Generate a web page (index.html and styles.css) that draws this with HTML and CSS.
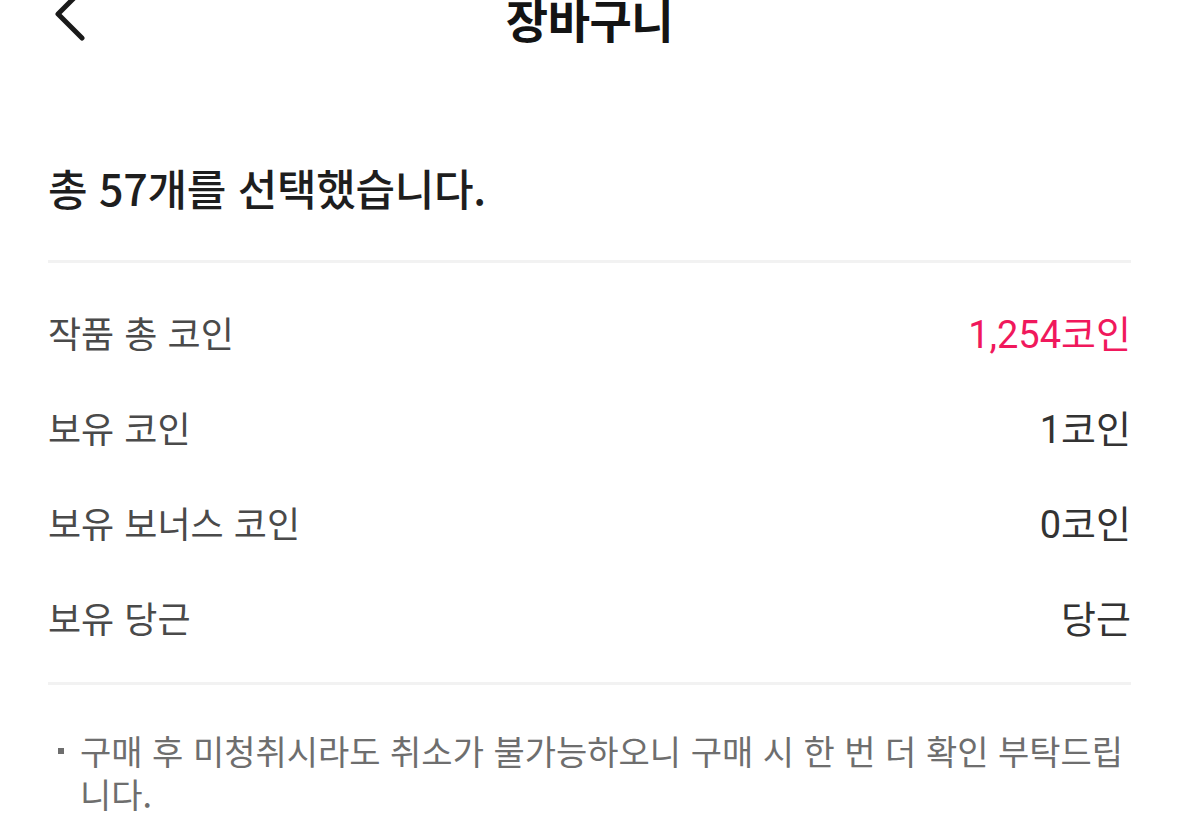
FILE: index.html
```html
<!DOCTYPE html>
<html lang="ko">

<head>
    <meta charset="UTF-8">
    <title>장바구니</title>
    <link rel="stylesheet" href="styles.css">
</head>

<body>

    <header class="topbar">
        <button class="back" type="button" aria-label="뒤로">
            <svg width="40" height="60" viewBox="0 0 40 60">
                <polyline points="32,-10 8,14 32,38" fill="none" stroke="#1a1a1a" stroke-width="5"
                    stroke-linecap="round" stroke-linejoin="round" />
            </svg>
        </button>
        <h1 class="title">장바구니</h1>
    </header>

    <main class="cart">
        <p class="count">총 57개를 선택했습니다.</p>

        <ul class="summary">
            <li class="row">
                <span class="label">작품 총 코인</span>
                <span class="value total">1,254코인</span>
            </li>
            <li class="row">
                <span class="label">보유 코인</span>
                <span class="value">1코인</span>
            </li>
            <li class="row">
                <span class="label">보유 보너스 코인</span>
                <span class="value">0코인</span>
            </li>
            <li class="row">
                <span class="label">보유 당근</span>
                <span class="value">당근</span>
            </li>
        </ul>

        <ul class="notice">
            <li>구매 후 미청취시라도 취소가 불가능하오니 구매 시 한 번 더 확인 부탁드립니다.</li>
        </ul>
    </main>

</body>

</html>
```

FILE: styles.css
```css
body {
    margin: 0;
    background-color: #fff;
    font-family: "Noto Sans CJK KR", "Noto Sans", sans-serif;
    color: #1a1a1a;
}

/* Header */
.topbar {
    position: relative;
    height: 36px;
    display: flex;
    align-items: center;
    justify-content: center;
}

.back {
    position: absolute;
    left: 50px;
    top: 0;
    padding: 0;
    border: 0;
    background: none;
    height: 36px;
    overflow: visible;
}

.back svg {
    display: block;
    overflow: visible;
}

.title {
    margin: 0;
    font-size: 46px;
    font-weight: 700;
    line-height: 26px;
    letter-spacing: -0.5px;
    color: #141414;
}

/* Content */
.cart {
    padding: 0 48px;
}

.count {
    margin: 0;
    padding: 127px 0 49px;
    font-size: 43px;
    font-weight: 500;
    line-height: 48px;
    letter-spacing: -0.3px;
    color: #1e1e1e;
    border-bottom: 3px solid #f2f2f2;
}

.summary {
    list-style: none;
    margin: 0;
    padding: 21px 0 18px;
    border-bottom: 3px solid #f2f2f2;
}

.row {
    display: flex;
    justify-content: space-between;
    align-items: center;
    height: 95px;
    font-size: 36px;
}

.label {
    color: #4a4a4a;
}

.value {
    font-family: Roboto, "Noto Sans CJK KR", sans-serif;
    font-size: 38px;
    color: #333;
}

.value.total {
    color: #f0185c;
}

.notice {
    list-style: none;
    margin: 0;
    padding: 44px 0 0 32px;
}

.notice li {
    position: relative;
    font-size: 34px;
    line-height: 43px;
    color: #6e6e6e;
}

.notice li::before {
    content: "";
    position: absolute;
    left: -22px;
    top: 19px;
    width: 6px;
    height: 6px;
    background-color: #6e6e6e;
}
```
